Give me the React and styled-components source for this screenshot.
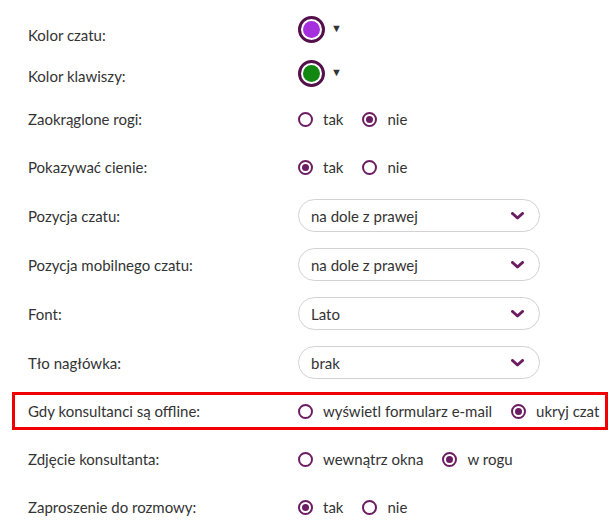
import React, { useState } from "react";
import styled, { createGlobalStyle } from "styled-components";

const GlobalStyle = createGlobalStyle`
  body {
    margin: 0;
    background: #fff;
    font-family: Lato, "Open Sans", sans-serif;
    color: #333;
  }
`;

const PURPLE = "#6c1d62";

const Page = styled.div`
  width: 611px;
  box-sizing: border-box;
  padding: 14px 6px 0 15px;
  font-size: 15px;
`;

const ColorGroup = styled.div`
  display: flex;
  flex-direction: column;
`;

const ColorRow = styled.div`
  display: flex;
  align-items: center;
  height: 41px;
  padding-left: 13px;
`;

const Settings = styled.div`
  display: flex;
  flex-direction: column;
  gap: 16px;
  margin-top: 7px;
`;

const Row = styled.div`
  display: flex;
  align-items: center;
  min-height: 32px;
  padding-left: 13px;
  outline: ${(p) => (p.highlight ? "3px solid #f00000" : "none")};
  outline-offset: 0;
`;

const Label = styled.div`
  width: 270px;
  flex-shrink: 0;
`;

const Picker = styled.div`
  display: flex;
  align-items: flex-start;
  gap: 6px;
  transform: translateY(${(p) => p.lift}px);
`;

const Swatch = styled.div`
  width: 27px;
  height: 27px;
  box-sizing: border-box;
  border-radius: 50%;
  border: 3px solid #54104b;
  padding: 2px;
  background: #fff;

  &::after {
    content: "";
    display: block;
    width: 100%;
    height: 100%;
    border-radius: 50%;
    background: ${(p) => p.color};
  }
`;

const Caret = styled.span`
  font-size: 11px;
  line-height: 1;
  margin-top: 6px;
  color: #333;
`;

const Options = styled.div`
  display: flex;
  align-items: center;
  gap: 19px;
`;

const Option = styled.label`
  display: flex;
  align-items: center;
  gap: 10px;
  cursor: pointer;
`;

const RadioDot = styled.span`
  width: 15px;
  height: 15px;
  box-sizing: border-box;
  border-radius: 50%;
  border: 2px solid ${PURPLE};
  display: flex;
  align-items: center;
  justify-content: center;

  &::after {
    content: "";
    width: 7px;
    height: 7px;
    border-radius: 50%;
    background: ${(p) => (p.checked ? PURPLE : "transparent")};
  }
`;

const SelectBox = styled.div`
  width: 242px;
  height: 33px;
  box-sizing: border-box;
  border: 1px solid #d2d2d2;
  border-radius: 17px;
  background: #fff;
  display: flex;
  align-items: center;
  justify-content: space-between;
  padding: 0 15px 0 12px;
`;

const Chevron = () => (
  <svg width="13" height="8" viewBox="0 0 13 8">
    <path
      d="M1.5 1.5 L6.5 6 L11.5 1.5"
      fill="none"
      stroke={PURPLE}
      strokeWidth="3"
      strokeLinecap="round"
      strokeLinejoin="round"
    />
  </svg>
);

const Radios = ({ options, initial }) => {
  const [value, setValue] = useState(initial);
  return (
    <Options>
      {options.map((o) => (
        <Option key={o} onClick={() => setValue(o)}>
          <RadioDot checked={value === o} />
          {o}
        </Option>
      ))}
    </Options>
  );
};

const rows = [
  { label: "Zaokrąglone rogi:", radios: ["tak", "nie"], value: "nie" },
  { label: "Pokazywać cienie:", radios: ["tak", "nie"], value: "tak" },
  { label: "Pozycja czatu:", select: "na dole z prawej" },
  { label: "Pozycja mobilnego czatu:", select: "na dole z prawej" },
  { label: "Font:", select: "Lato" },
  { label: "Tło nagłówka:", select: "brak" },
  {
    label: "Gdy konsultanci są offline:",
    radios: ["wyświetl formularz e-mail", "ukryj czat"],
    value: "ukryj czat",
    highlight: true,
  },
  {
    label: "Zdjęcie konsultanta:",
    radios: ["wewnątrz okna", "w rogu"],
    value: "w rogu",
  },
  { label: "Zaproszenie do rozmowy:", radios: ["tak", "nie"], value: "tak" },
];

export default function App() {
  return (
    <Page>
      <GlobalStyle />
      <ColorGroup>
        <ColorRow>
          <Label>Kolor czatu:</Label>
          <Picker lift={-5}>
            <Swatch color="#a52fdd" />
            <Caret>▼</Caret>
          </Picker>
        </ColorRow>
        <ColorRow>
          <Label>Kolor klawiszy:</Label>
          <Picker lift={-2}>
            <Swatch color="#128712" />
            <Caret>▼</Caret>
          </Picker>
        </ColorRow>
      </ColorGroup>
      <Settings>
        {rows.map((r) => (
          <Row key={r.label} highlight={r.highlight}>
            <Label>{r.label}</Label>
            {r.radios ? (
              <Radios options={r.radios} initial={r.value} />
            ) : (
              <SelectBox>
                {r.select}
                <Chevron />
              </SelectBox>
            )}
          </Row>
        ))}
      </Settings>
    </Page>
  );
}
